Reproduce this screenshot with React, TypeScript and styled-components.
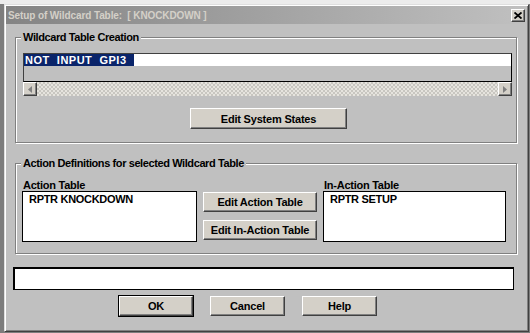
import React from 'react'
import styled, { createGlobalStyle, css } from 'styled-components'

const GlobalStyle = createGlobalStyle`
  html, body {
    margin: 0;
    padding: 0;
  }
  body {
    font-family: 'Liberation Sans', Arial, sans-serif;
    font-size: 11px;
    font-weight: bold;
  }
`

const Desktop = styled.div`
  width: 530px;
  height: 333px;
  overflow: hidden;
  background: linear-gradient(to bottom, #ececec 0 4px, #7d7d7d 4px);
  display: flex;
  align-items: flex-start;
`

const Window = styled.div`
  margin: 4px 0 0 4px;
  width: 525px;
  height: 328px;
  box-sizing: border-box;
  padding: 1px;
  background: #c0c0c0;
  border: 1px solid;
  border-color: #dfdfdf #404040 #404040 #dfdfdf;
  box-shadow: inset 1px 1px 0 #fff, inset -1px -1px 0 #808080;
  display: flex;
  flex-direction: column;
`

const TitleBar = styled.div`
  height: 18px;
  display: flex;
  align-items: center;
  justify-content: space-between;
  padding: 0 2px 0 2px;
  background: linear-gradient(to right, #848484, #c0c0c0);
  color: #d4d0c8;
  font-size: 10px;
  font-weight: bold;
`

const TitleText = styled.span`
  white-space: pre;
  letter-spacing: -0.1px;
`

const CloseButton = styled.div`
  width: 14px;
  height: 13px;
  box-sizing: border-box;
  background: #d4d0c8;
  border: 1px solid;
  border-color: #fff #404040 #404040 #fff;
  box-shadow: inset -1px -1px 0 #808080;
  display: flex;
  align-items: center;
  justify-content: center;
`

const Body = styled.div`
  display: flex;
  flex-direction: column;
  padding: 6px 10px 0 9px;
`

const Group = styled.fieldset<{ $height: number; $gapTop?: number }>`
  margin: ${({ $gapTop }) => $gapTop ?? 0}px 0 0 0;
  padding: 0;
  min-width: 0;
  height: ${({ $height }) => $height}px;
  box-sizing: border-box;
  border: 1px solid #808080;
  box-shadow: 1px 1px 0 #fff, inset 1px 1px 0 #fff;
`

const Legend = styled.legend`
  margin-left: 5px;
  padding: 0 2px;
  line-height: 14px;
  background: #c0c0c0;
  color: #000;
  letter-spacing: -0.4px;
`

const CreationContent = styled.div`
  display: flex;
  flex-direction: column;
  align-items: stretch;
  padding: 9px 4px 0 7px;
`

const EditBox = styled.div`
  height: 29px;
  box-sizing: border-box;
  border: 1px solid #000;
  border-color: #404040 #000 #000 #404040;
  background: #c0c0c0;
`

const EditRow = styled.div`
  height: 12px;
  background: #fff;
  display: flex;
  align-items: center;
`

const Selected = styled.span`
  background: #0a246a;
  color: #fff;
  white-space: pre;
  line-height: 12px;
  letter-spacing: 0.5px;
  padding: 0 7px 0 1px;
`

const ScrollBar = styled.div`
  height: 14px;
  display: flex;
`

const ScrollTrack = styled.div`
  flex: 1;
  background-color: #e6e4de;
  background-image: conic-gradient(#c8c6c0 25%, transparent 0 50%, #c8c6c0 0 75%, transparent 0);
  background-size: 4px 4px;
`

const ArrowButton = styled.div`
  width: 14px;
  height: 14px;
  box-sizing: border-box;
  background: #d4d0c8;
  border: 1px solid;
  border-color: #fff #404040 #404040 #fff;
  box-shadow: inset -1px -1px 0 #808080;
  display: flex;
  align-items: center;
  justify-content: center;
`

const Button = styled.button<{ $width: number; $height?: number; $default?: boolean }>`
  width: ${({ $width }) => $width}px;
  height: ${({ $height }) => $height ?? 21}px;
  box-sizing: border-box;
  margin: 0;
  padding: 0;
  font-family: inherit;
  font-size: 11px;
  font-weight: bold;
  letter-spacing: -0.2px;
  color: #000;
  background: #d4d0c8;
  border: 1px solid;
  border-color: #fff #404040 #404040 #fff;
  box-shadow: inset -1px -1px 0 #808080;
  ${({ $default }) =>
    $default &&
    css`
      box-shadow: inset -1px -1px 0 #808080, 0 0 0 1px #000;
    `}
`

const CenterRow = styled.div`
  display: flex;
  justify-content: center;
  padding: 12px 0 0 2px;
`

const ActionContent = styled.div`
  display: grid;
  grid-template-columns: 175px 114px 183px;
  column-gap: 6px;
  padding: 9px 0 0 6px;
`

const Column = styled.div`
  display: flex;
  flex-direction: column;
`

const Label = styled.div`
  height: 12px;
  line-height: 12px;
  padding-left: 1px;
  color: #000;
  letter-spacing: -0.25px;
`

const ListBox = styled.div`
  height: 51px;
  box-sizing: border-box;
  border: 1px solid #000;
  background: #fff;
  padding: 1px 6px;
  color: #000;
  line-height: 12px;
  letter-spacing: -0.3px;
`

const ButtonStack = styled.div`
  display: flex;
  flex-direction: column;
  gap: 8px;
  padding-top: 13px;
`

const MessageBox = styled.div`
  margin: 13px 3px 0 -2px;
  height: 23px;
  box-sizing: border-box;
  background: #fff;
  border: 1px solid #000;
  box-shadow: inset 1px 1px 0 #000;
`

const ButtonRow = styled.div`
  display: flex;
  gap: 17px;
  padding: 6px 0 0 104px;
`

const ArrowLeft = () => (
  <svg width="4" height="7" viewBox="0 0 4 7">
    <path d="M4 0 L0 3.5 L4 7 Z" fill="#808080" />
  </svg>
)

const ArrowRight = () => (
  <svg width="4" height="7" viewBox="0 0 4 7">
    <path d="M0 0 L4 3.5 L0 7 Z" fill="#808080" />
  </svg>
)

const CloseIcon = () => (
  <svg width="8" height="7" viewBox="0 0 8 7">
    <path d="M0.5 0.5 L7.5 6.5 M7.5 0.5 L0.5 6.5" stroke="#000" strokeWidth="1.8" />
  </svg>
)

export default function App() {
  return (
    <>
      <GlobalStyle />
      <Desktop>
        <Window>
          <TitleBar>
            <TitleText>Setup of Wildcard Table:  [ KNOCKDOWN ]</TitleText>
            <CloseButton>
              <CloseIcon />
            </CloseButton>
          </TitleBar>
          <Body>
            <Group $height={113}>
              <Legend>Wildcard Table Creation</Legend>
              <CreationContent>
                <EditBox>
                  <EditRow>
                    <Selected>NOT  INPUT  GPI3</Selected>
                  </EditRow>
                </EditBox>
                <ScrollBar>
                  <ArrowButton>
                    <ArrowLeft />
                  </ArrowButton>
                  <ScrollTrack />
                  <ArrowButton>
                    <ArrowRight />
                  </ArrowButton>
                </ScrollBar>
                <CenterRow>
                  <Button $width={157}>Edit System States</Button>
                </CenterRow>
              </CreationContent>
            </Group>
            <Group $height={98} $gapTop={13}>
              <Legend>Action Definitions for selected Wildcard Table</Legend>
              <ActionContent>
                <Column>
                  <Label>Action Table</Label>
                  <ListBox>RPTR KNOCKDOWN</ListBox>
                </Column>
                <ButtonStack>
                  <Button $width={114} $height={20}>Edit Action Table</Button>
                  <Button $width={114} $height={20}>Edit In-Action Table</Button>
                </ButtonStack>
                <Column>
                  <Label>In-Action Table</Label>
                  <ListBox>RPTR SETUP</ListBox>
                </Column>
              </ActionContent>
            </Group>
            <MessageBox />
            <ButtonRow>
              <Button $width={74} $height={20} $default>OK</Button>
              <Button $width={75} $height={20}>Cancel</Button>
              <Button $width={75} $height={20}>Help</Button>
            </ButtonRow>
          </Body>
        </Window>
      </Desktop>
    </>
  )
}
